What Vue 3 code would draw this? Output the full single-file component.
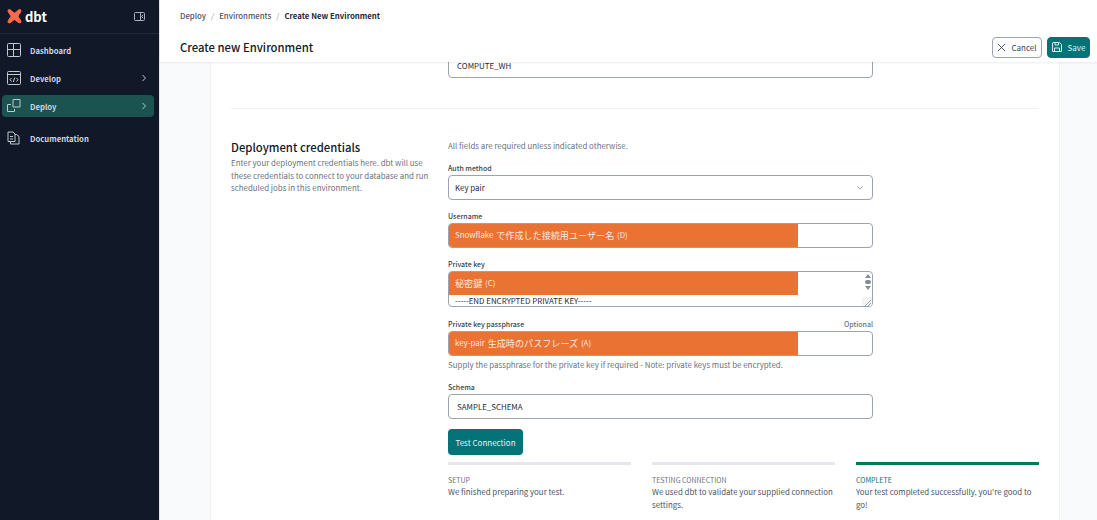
<template>
  <div class="app">
    <aside class="sidebar">
      <div class="brand">
        <div class="logo">
          <svg width="15" height="16" viewBox="0 0 15 16">
            <path fill="#ff694a" d="M1.200.6c.7-.5 1.600-.4 2.300 0l3.200 2.600c.5.4 1.100.4 1.600 0L11.500.6c.7-.4 1.600-.5 2.300 0 .8.700.8 1.700.3 2.500l-2.300 3.300c-.4.600-.4 1.200 0 1.700l2.300 3.400c.5.800.5 1.800-.3 2.500-.7.500-1.600.4-2.300 0l-3.200-2.600c-.5-.4-1.100-.4-1.600 0l-3.200 2.600c-.7.400-1.600.5-2.300 0-.8-.7-.8-1.700-.3-2.500l2.300-3.400c.4-.5.400-1.100 0-1.700L.9 3.100C.4 2.300.4 1.300 1.200.6z" />
          </svg>
          <span class="logo-text">dbt</span>
        </div>
        <svg class="collapse" width="11" height="9" viewBox="0 0 11 9" fill="none" stroke="#a9b0bc" stroke-width="1">
          <rect x="0.500" y="0.500" width="10" height="8" rx="1" />
          <path d="M6.500.5v8" />
          <path d="M9 2.800 7.800 4.500 9 6.200" />
        </svg>
      </div>
      <nav class="nav">
        <a v-for="item in navItems" :key="item.label" class="nav-item" :class="{ active: item.active, doc: item.doc }">
          <svg width="14" height="14" viewBox="0 0 14 14" fill="none" stroke="#c3c8d0" stroke-width="1">
            <path v-for="d in item.paths" :key="d" :d="d" />
          </svg>
          <span class="nav-label">{{ item.label }}</span>
          <svg v-if="item.arrow" class="chev" width="6" height="8" viewBox="0 0 6 8" fill="none" stroke="#c3c8d0" stroke-width="1">
            <path d="M1.500 1 4.500 4 1.500 7" />
          </svg>
        </a>
      </nav>
    </aside>

    <div class="page">
      <header class="topbar">
        <div class="crumbs">
          <span>Deploy</span><i>/</i><span>Environments</span><i>/</i><span class="current">Create New Environment</span>
        </div>
        <div class="title-row">
          <h1>Create new Environment</h1>
          <div class="actions">
            <button class="btn-cancel">
              <svg width="9" height="9" viewBox="0 0 10 10" fill="none" stroke="#374151" stroke-width="1"><path d="M1 1l8 8M9 1l-8 8" /></svg>
              Cancel
            </button>
            <button class="btn-save">
              <svg width="10" height="10" viewBox="0 0 10 10" fill="none" stroke="#d7ecec" stroke-width="1">
                <path d="M1 .5h6.500L9.500 2.500V9.500H.5V1z" />
                <path d="M3 .5v2.500h3.500V.5M2.500 9.500V6h5v3.500" />
              </svg>
              Save
            </button>
          </div>
        </div>
      </header>

      <main class="content">
        <div class="card">
          <div class="top-field">
            <div class="input">COMPUTE_WH</div>
          </div>
          <hr class="divider" />
          <section class="credentials">
            <div class="intro">
              <h2>Deployment credentials</h2>
              <p>Enter your deployment credentials here. dbt will use these credentials to connect to your database and run scheduled jobs in this environment.</p>
            </div>
            <div class="form">
              <p class="required">All fields are required unless indicated otherwise.</p>

              <label class="label auth">Auth method</label>
              <div class="input select">
                Key pair
                <svg width="6" height="4" viewBox="0 0 6 4" fill="none" stroke="#9ca3af" stroke-width="1"><path d="M.5.5 3 3 5.500.5" /></svg>
              </div>

              <label class="label">Username</label>
              <div class="input masked">
                <div class="mask">Snowflake <span class="cjk">で作成した接続用ユーザー名</span> (D)</div>
              </div>

              <label class="label">Private key</label>
              <div class="input masked textarea">
                <div class="mask tall"><span class="cjk">秘密鍵</span> (C)</div>
                <div class="key-end">-----END ENCRYPTED PRIVATE KEY-----</div>
                <div class="scrollbar">
                  <span class="up"></span><span class="thumb"></span><span class="down"></span>
                </div>
                <div class="resizer">
                  <svg width="10" height="9" viewBox="0 0 10 9" fill="none" stroke="#9ca3af" stroke-width="1"><path d="M9 3 3 9M9 6 6 9" /></svg>
                </div>
              </div>

              <div class="label-row">
                <label class="label">Private key passphrase</label>
                <span class="optional">Optional</span>
              </div>
              <div class="input masked">
                <div class="mask">key-pair <span class="cjk">生成時のパスフレーズ</span> (A)</div>
              </div>
              <p class="help">Supply the passphrase for the private key if required - Note: private keys must be encrypted.</p>

              <label class="label schema">Schema</label>
              <div class="input">SAMPLE_SCHEMA</div>

              <button class="btn-test">Test Connection</button>
            </div>
          </section>
          <div class="steps">
            <div v-for="step in steps" :key="step.name" class="step" :class="{ done: step.done }">
              <div class="bar"></div>
              <div class="step-name">{{ step.name }}</div>
              <div class="step-text">{{ step.text }}</div>
            </div>
          </div>
        </div>
      </main>
    </div>
  </div>
</template>

<script setup>
const navItems = [
  { label: "Dashboard", paths: ["M.5 1.500a1 1 0 0 1 1-1h11a1 1 0 0 1 1 1v11a1 1 0 0 1-1 1h-11a1 1 0 0 1-1-1z", "M.5 6.500h13", "M6.500.5v13"] },
  { label: "Develop", arrow: true, paths: ["M.5 1.500a1 1 0 0 1 1-1h11a1 1 0 0 1 1 1v11a1 1 0 0 1-1 1h-11a1 1 0 0 1-1-1z", "M.5 3.500h13", "M4.500 7 3 8.700 4.500 10.500", "M9.500 7 11 8.700 9.500 10.500", "M7.800 6.500 6.200 11"] },
  { label: "Deploy", arrow: true, active: true, paths: ["M6 .5h7v7.500H6z", "M4 5.500H.5v7h7v-2.500"] },
  { label: "Documentation", doc: true, paths: ["M1 1h5l2 2v7.500H1z", "M3.500 10.500V13h8.500V5.500L9.500 3.500H8", "M3 5.500h3M3 8h3"] },
];

const steps = [
  { name: "SETUP", text: "We finished preparing your test." },
  { name: "TESTING CONNECTION", text: "We used dbt to validate your supplied connection settings." },
  { name: "COMPLETE", text: "Your test completed successfully, you're good to go!", done: true },
];
</script>

<style>
html,
body {
  margin: 0;
  overflow: hidden;
}
</style>

<style scoped>
* {
  box-sizing: border-box;
}

.app {
  display: flex;
  width: 1097px;
  height: 520px;
  overflow: hidden;
  font-family: "Noto Sans CJK JP", "Noto Sans", sans-serif;
  color: #1f2937;
  background: #f9fafb;
}

.sidebar {
  width: 160px;
  flex-shrink: 0;
  background: #111827;
  border-right: 1px solid #e5e7eb;
}

.brand {
  display: flex;
  align-items: center;
  justify-content: space-between;
  height: 34px;
  padding: 0 14px 0 7px;
  border-bottom: 1px solid #1f2937;
}

.logo {
  display: flex;
  align-items: center;
  gap: 3px;
}

.logo-text {
  color: #fff;
  font-size: 13px;
  font-weight: 700;
  line-height: 16px;
}

.nav {
  display: flex;
  flex-direction: column;
  padding: 5px 5px 0 2px;
}

.nav-item {
  display: flex;
  align-items: center;
  height: 22px;
  margin-bottom: 6px;
  padding: 0 7px 0 5px;
  border-radius: 4px;
  color: #cbd5e1;
  font-size: 7.700px;
  font-weight: 700;
}

.nav-item.active {
  background: #1b5350;
}

.nav-item.doc {
  margin-top: 4px;
}

.nav-label {
  margin-left: 9px;
  flex: 1;
}

.page {
  flex: 1;
  display: flex;
  flex-direction: column;
  min-width: 0;
}

.topbar {
  position: relative;
  z-index: 1;
  height: 62px;
  flex-shrink: 0;
  padding: 9px 7px 0 20px;
  background: #fff;
  box-shadow: 0 1px 2px rgba(17, 24, 39, 0.08);
}

.crumbs {
  display: flex;
  align-items: center;
  height: 13px;
  font-size: 7.800px;
  font-weight: 500;
  color: #4b5563;
}

.crumbs i {
  margin: 0 5px;
  font-style: normal;
  font-weight: 400;
  color: #9ca3af;
}

.crumbs .current {
  font-weight: 700;
  color: #1f2937;
}

.title-row {
  display: flex;
  align-items: center;
  justify-content: space-between;
  margin-top: 10px;
  height: 30px;
}

h1 {
  margin: 0;
  font-size: 11.300px;
  font-weight: 500;
  color: #111827;
}

.actions {
  display: flex;
  gap: 5px;
}

.actions button {
  display: flex;
  align-items: center;
  justify-content: center;
  height: 21px;
  border-radius: 4px;
  font-family: inherit;
  font-size: 8px;
}

.btn-cancel {
  width: 50px;
  gap: 5px;
  padding: 0;
  background: #fff;
  border: 1px solid #9ca3af;
  color: #374151;
}

.btn-save {
  width: 43px;
  gap: 6px;
  padding: 0;
  background: #047377;
  border: 1px solid #047377;
  color: #e5f2f2;
}

.content {
  flex: 1;
  min-height: 0;
  overflow: hidden;
  padding: 0 37px 0 50px;
}

.card {
  margin-top: -9px;
  padding: 0 20px 40px;
  height: 500px;
  background: #fff;
  border-left: 1px solid #f1f2f4;
  border-right: 1px solid #f1f2f4;
}

.top-field {
  margin-left: 217px;
  width: 425px;
}

.top-field .input {
  line-height: 8px;
}

.input {
  position: relative;
  display: flex;
  align-items: center;
  justify-content: space-between;
  height: 25px;
  padding: 0 8px;
  background: #fff;
  border: 1px solid #9ca3af;
  border-radius: 4px;
  font-size: 7.900px;
  line-height: 10px;
  color: #1f2937;
}

.select {
  padding: 0 9px 0 6px;
}

.divider {
  margin: 30px 0 0;
  border: 0;
  border-top: 1px solid #eef0f2;
}

.credentials {
  display: flex;
  padding-top: 30px;
}

.intro {
  width: 217px;
  flex-shrink: 0;
  padding-right: 16px;
}

h2 {
  margin: 0;
  font-size: 11.300px;
  line-height: 16px;
  font-weight: 500;
  color: #111827;
}

.intro p {
  margin: 2px 0 0;
  font-size: 7.900px;
  line-height: 12.700px;
  color: #6b7280;
}

.form {
  width: 425px;
}

.required {
  margin: 0;
  font-size: 7.900px;
  line-height: 14px;
  color: #6b7280;
}

.label {
  display: block;
  margin: 11px 0 1px;
  height: 11px;
  font-size: 7px;
  line-height: 11px;
  font-weight: 500;
  color: #374151;
}

.label.auth,
.label.schema {
  margin-top: 10px;
}

.label-row {
  display: flex;
  justify-content: space-between;
}

.label-row .label {
  margin-top: 12px;
}

.optional {
  margin-top: 12px;
  font-size: 7px;
  line-height: 11px;
  font-weight: 500;
  color: #6b7280;
}

.masked {
  padding: 0;
  overflow: hidden;
}

.mask {
  display: flex;
  align-items: center;
  gap: 1px;
  width: 349px;
  height: 100%;
  padding: 0 0 1px 6px;
  background: #ea7233;
  color: #fbe9df;
  font-size: 7.900px;
  white-space: pre;
}

.cjk {
  font-size: 9.100px;
}

.textarea {
  display: block;
  height: 36px;
}

.mask.tall {
  height: 23px;
}

.key-end {
  padding-left: 6px;
  margin-top: 1px;
  font-size: 7.900px;
  line-height: 10px;
  white-space: nowrap;
}

.scrollbar {
  position: absolute;
  top: 2px;
  right: 0;
  width: 9px;
  display: flex;
  flex-direction: column;
  align-items: center;
  gap: 2px;
}

.scrollbar .up {
  border: 3px solid transparent;
  border-top: 0;
  border-bottom: 4px solid #858b96;
}

.scrollbar .down {
  border: 3px solid transparent;
  border-bottom: 0;
  border-top: 4px solid #858b96;
}

.scrollbar .thumb {
  width: 6px;
  height: 4px;
  border-radius: 2px;
  background: #858b96;
}

.resizer {
  position: absolute;
  right: 0;
  bottom: 0;
  width: 10px;
  height: 9px;
  background: #f3f4f6;
}

.resizer svg {
  display: block;
}

.help {
  margin: 2px 0 0;
  font-size: 7.900px;
  line-height: 14px;
  color: #6b7280;
}

.btn-test {
  display: block;
  width: 75px;
  height: 26px;
  margin-top: 10px;
  padding: 0;
  background: #047377;
  border: 0;
  border-radius: 4px;
  color: #e5f2f2;
  font-family: inherit;
  font-size: 8px;
}

.steps {
  display: grid;
  grid-template-columns: repeat(3, 183px);
  column-gap: 21px;
  margin: 7px 0 0 217px;
}

.bar {
  height: 3px;
  background: #e5e7eb;
}

.step.done .bar {
  background: #047857;
}

.step-name {
  margin-top: 9px;
  font-size: 7px;
  line-height: 12px;
  color: #6b7280;
}

.step.done .step-name {
  color: #047377;
}

.step-text {
  font-size: 7.900px;
  line-height: 12.700px;
  color: #4b5563;
}
</style>
